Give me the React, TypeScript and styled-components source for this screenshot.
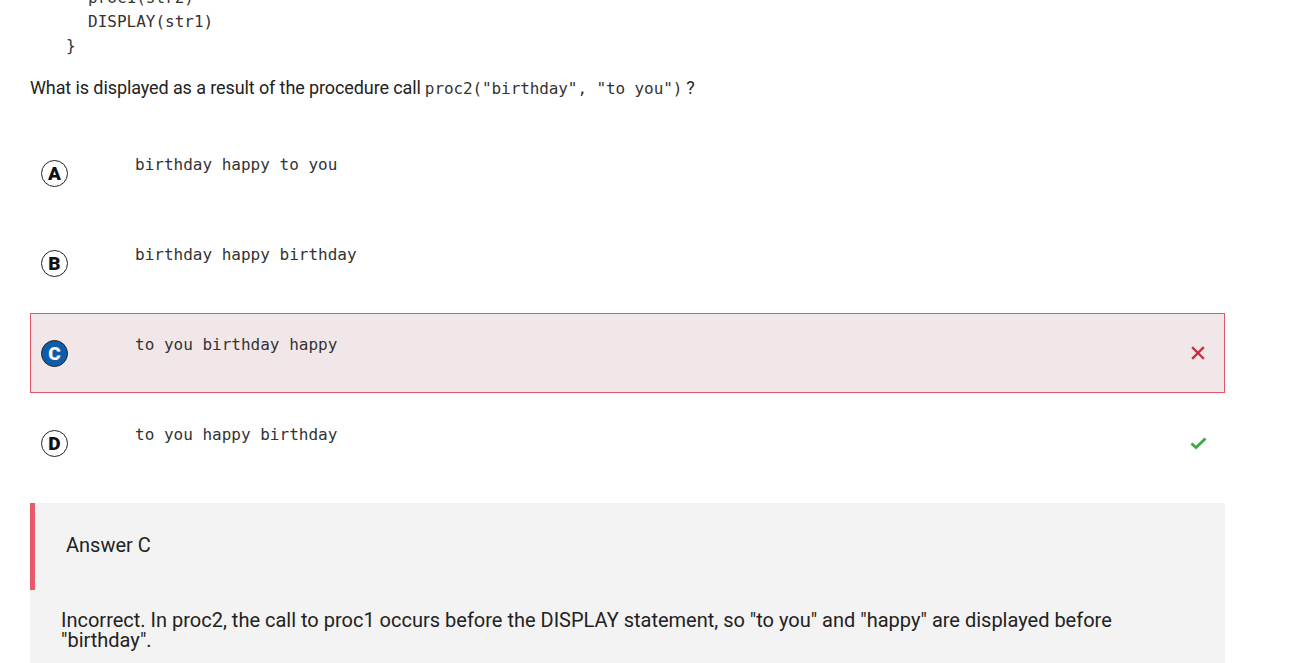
import React from "react";
import styled, { createGlobalStyle } from "styled-components";

const Global = createGlobalStyle`
  html, body { margin: 0; padding: 0; background: #fff; }
  body { font-family: Roboto, "Liberation Sans", sans-serif; color: #222; overflow: hidden; }
`;

const Page = styled.div`
  margin-top: -14px;
  padding: 0 90px 0 30px;
  width: 1195px;
`;

const CodeBlock = styled.pre`
  margin: 0 0 0 36px;
  font-family: "DejaVu Sans Mono", monospace;
  font-size: 16px;
  line-height: 24px;
  color: #333;
`;

const CodeLine = styled.div<{ $indent?: number }>`
  padding-left: ${(p) => p.$indent ?? 0}px;
  white-space: pre;
`;

const Question = styled.p`
  margin: 16px 0 0 0;
  font-size: 18px;
  line-height: 27px;
  color: #222;
  letter-spacing: -0.1px;
`;

const InlineCode = styled.code`
  font-family: "DejaVu Sans Mono", monospace;
  font-size: 16px;
  color: #333;
  margin: 0 4px 0 4px;
`;

const Options = styled.div`
  margin-top: 31px;
  display: flex;
  flex-direction: column;
  gap: 10px;
`;

const Row = styled.div<{ $wrong?: boolean }>`
  height: 80px;
  box-sizing: border-box;
  display: flex;
  align-items: center;
  padding: 0 16px 0 10px;
  border: 1px solid ${(p) => (p.$wrong ? "#e4566a" : "transparent")};
  background: ${(p) => (p.$wrong ? "#f2e7e8" : "transparent")};
`;

const Letter = styled.div<{ $selected?: boolean }>`
  width: 27px;
  height: 27px;
  box-sizing: border-box;
  border-radius: 50%;
  border: 1.8px solid #222;
  background: ${(p) => (p.$selected ? "#0c5cab" : "#fff")};
  color: ${(p) => (p.$selected ? "#fff" : "#111")};
  font-family: Roboto, "Liberation Sans", sans-serif;
  font-weight: 900;
  font-size: 19px;
  line-height: 1;
  display: flex;
  align-items: center;
  justify-content: center;
  flex: none;
`;

const OptionText = styled.div`
  flex: 1;
  align-self: flex-start;
  margin-top: 20px;
  margin-left: 67px;
  font-family: "DejaVu Sans Mono", monospace;
  font-size: 16px;
  line-height: 22px;
  color: #333;
  white-space: pre;
`;

const Mark = styled.div`
  width: 20px;
  display: flex;
  justify-content: center;
`;

const AnswerBox = styled.div`
  margin-top: 20px;
  background: #f3f3f3;
  padding-bottom: 20px;
`;

const AnswerHead = styled.div`
  height: 87px;
  box-sizing: border-box;
  border-left: 5px solid #e85a6a;
  display: flex;
  align-items: center;
  padding: 0 0 3px 31px;
  font-size: 20px;
  color: #222;
`;

const Explanation = styled.p`
  margin: 20px 0 0 0;
  padding: 0 30px 0 31px;
  font-size: 20px;
  line-height: 20px;
  color: #222;
`;

const XIcon = () => (
  <svg width="14" height="14" viewBox="0 0 14 14">
    <path d="M2 2 L12 12 M12 2 L2 12" stroke="#cc2a41" strokeWidth="2.4" strokeLinecap="square" />
  </svg>
);

const CheckIcon = () => (
  <svg width="17" height="14" viewBox="0 0 17 14">
    <path d="M1.5 7.5 L6 11.5 L15.5 2.5" stroke="#44a844" strokeWidth="3" fill="none" />
  </svg>
);

const options = [
  { l: "A", t: "birthday happy to you" },
  { l: "B", t: "birthday happy birthday" },
  { l: "C", t: "to you birthday happy", wrong: true },
  { l: "D", t: "to you happy birthday", right: true },
];

export default function App() {
  return (
    <>
      <Global />
      <Page>
        <CodeBlock>
          <CodeLine $indent={22}>proc1(str2)</CodeLine>
          <CodeLine $indent={22}>DISPLAY(str1)</CodeLine>
          <CodeLine>{"}"}</CodeLine>
        </CodeBlock>
        <Question>
          What is displayed as a result of the procedure call
          <InlineCode>proc2("birthday", "to you")</InlineCode>?
        </Question>
        <Options>
          {options.map((o) => (
            <Row key={o.l} $wrong={o.wrong}>
              <Letter $selected={o.wrong}>{o.l}</Letter>
              <OptionText>{o.t}</OptionText>
              <Mark>{o.wrong ? <XIcon /> : o.right ? <CheckIcon /> : null}</Mark>
            </Row>
          ))}
        </Options>
        <AnswerBox>
          <AnswerHead>Answer C</AnswerHead>
          <Explanation>
            Incorrect. In proc2, the call to proc1 occurs before the DISPLAY statement, so "to you" and "happy" are displayed before "birthday".
          </Explanation>
        </AnswerBox>
      </Page>
    </>
  );
}
